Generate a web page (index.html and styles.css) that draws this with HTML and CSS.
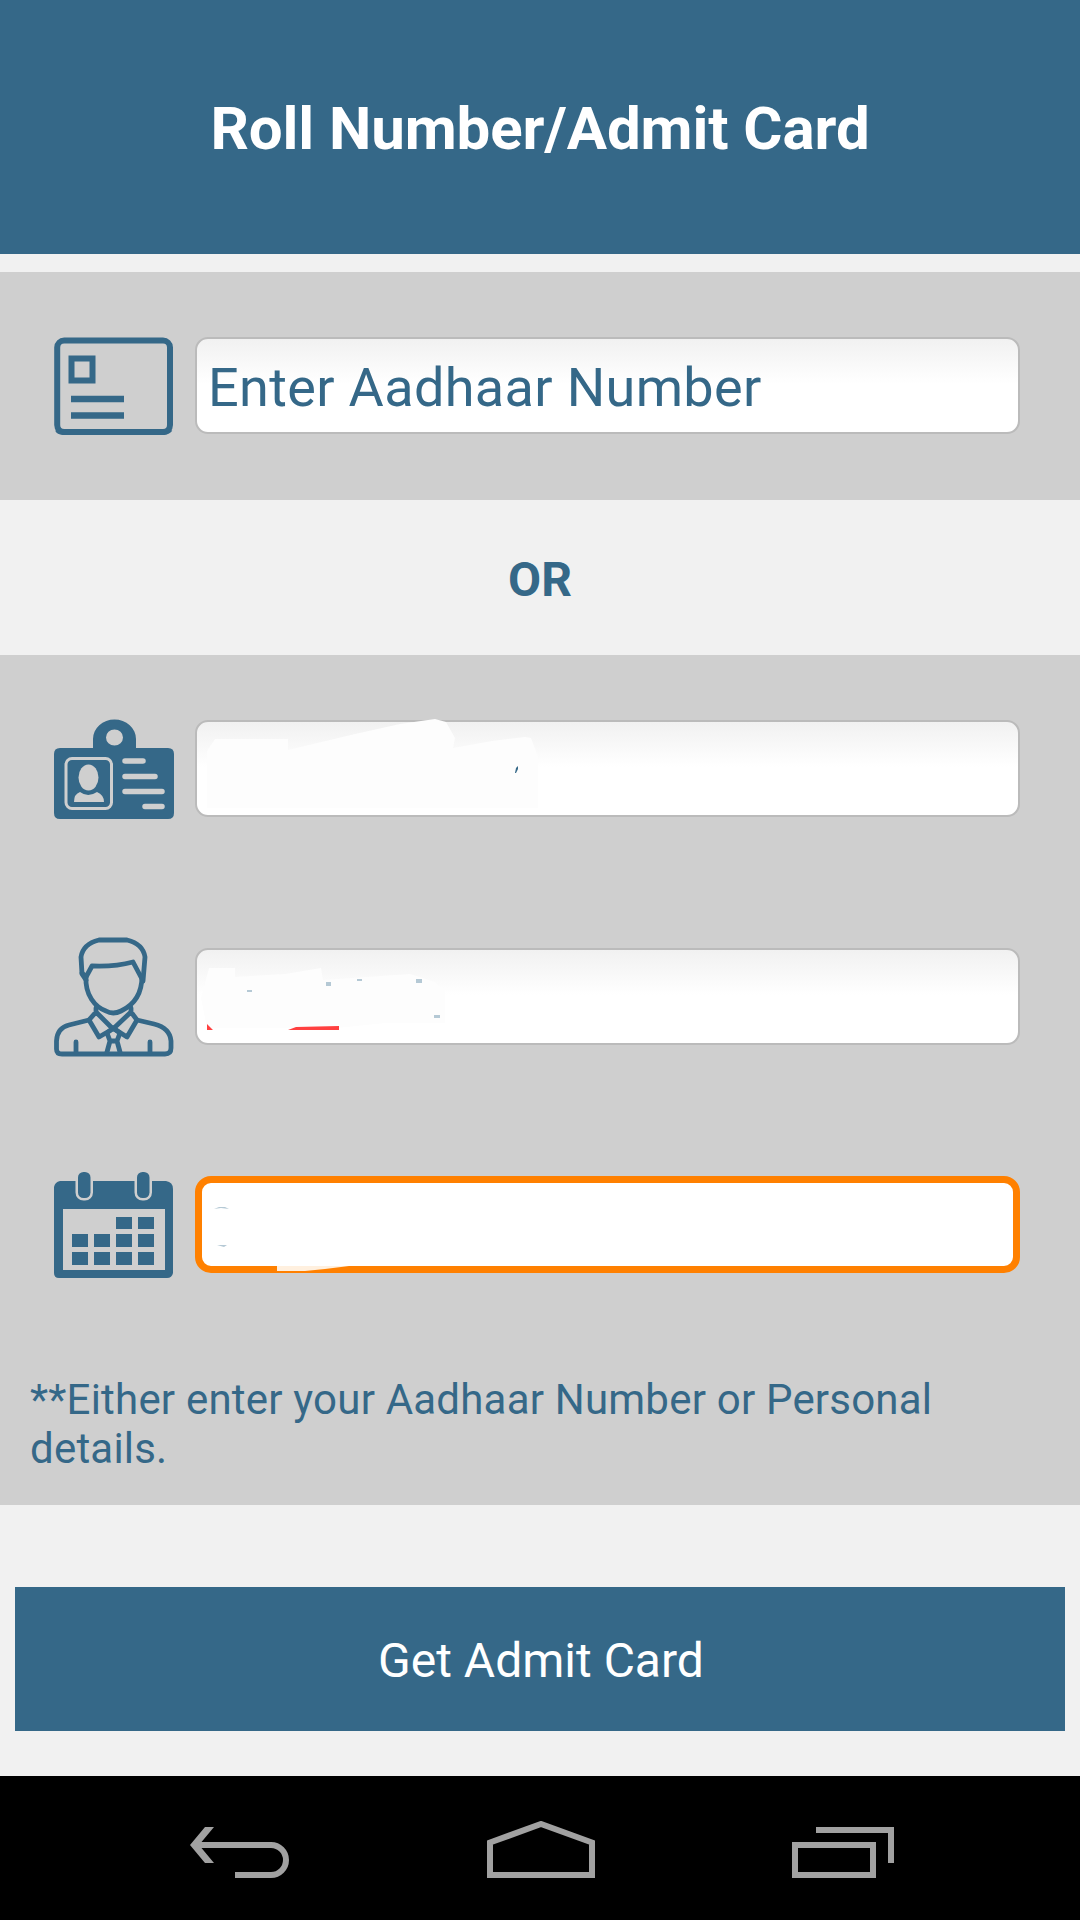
FILE: index.html
```html
<!DOCTYPE html>
<html lang="en">
<head>
<meta charset="utf-8">
<title>Roll Number/Admit Card</title>
<link rel="stylesheet" href="styles.css">
</head>
<body>
<header class="header"><h1 class="title">Roll Number/Admit Card</h1></header>
<main class="content">
  <section class="panel">
    <div class="row">
      <svg class="icon" viewBox="0 0 120 120">
        <rect class="line" x="3.2" y="14.500" width="112.8" height="91.500" rx="7" stroke-width="6"/>
        <path class="line" d="M2.500 104Q4 107 9 107.500H110Q115 107 117 104" stroke-width="3"/>
        <rect class="line" x="17.5" y="32.500" width="21" height="22" stroke-width="6"/>
        <path class="line" d="M17 73H70M17 89.500H70" stroke-width="6.500"/>
      </svg>
      <div class="field"><span class="placeholder">Enter Aadhaar Number</span></div>
    </div>
  </section>
  <div class="or">OR</div>
  <section class="panel">
    <div class="row">
      <svg class="icon" viewBox="0 0 120 120">
        <path class="solid" fill-rule="evenodd" d="M39 39V30A21.500 19.500 0 0 1 82 30V39H114Q120 39 120 45V104Q120 110 114 110H6Q0 110 0 104V45Q0 39 6 39ZM60.500 20.500A8.500 8 0 1 0 60.500 36.500A8.500 8 0 1 0 60.500 20.500Z"/>
        <rect class="light-line" x="12" y="49.500" width="45.500" height="50" rx="6"/>
        <ellipse class="light" cx="34.500" cy="68.500" rx="10" ry="13"/>
        <path class="light" d="M20 93Q20 85 26 83Q34 89 43 83Q50 86 50 93Z"/>
        <path class="light-bars" d="M71 52H89M71 67.500H101M71 82.500H108M91 97.500H108"/>
      </svg>
      <div class="field">
        <svg class="smudge" viewBox="0 0 825 97">
          <path d="M12 88V31L20 19H93V30L160 14 205 4 240 -1 251 2 260 18 258 28 297 21 330 17 336 18 343 37V88Z"/>
          <path class="ink" d="M320 53L321 48 323 46V49L321 53Z"/>
        </svg>
      </div>
    </div>
    <div class="row">
      <svg class="icon" viewBox="0 0 120 120">
        <g class="line" stroke-width="4.800" stroke-linejoin="round" stroke-linecap="round">
          <path d="M32 43L28 37 27 20Q29 7 45 3H73Q89 7 91 20L89 44"/>
          <path d="M28 36L32 40 38 29Q61 30 79 25L88 42"/>
          <path d="M32 40C31 58 41 70 52 74Q59 78 67 74C82 67 88 54 88 39"/>
          <path d="M42 71V75L35 83 45 100 57 93M77 71V75L83 83 73 100 62 93M42 75L59 92 77 75"/>
          <path d="M35 83L15 88Q3 91 2.500 104V112Q2.500 117 8 117H111Q117 117 117 111V104Q116 91 100 87L83 83"/>
          <path d="M22 105V116M96 105V116M53 115L56 104 53 96 59 91 66 96 63 104 66 115M56 104H63"/>
        </g>
      </svg>
      <div class="field">
        <svg class="smudge" viewBox="0 0 825 97">
          <path d="M12 80L6 50 14 20H40V29L90 26 126 20 128 32 215 26 240 34 250 44V75H190L142 80Z"/>
          <g class="spots"><path d="M52 42H57V44H52ZM131 34H136V38H131ZM162 31H167V33H162ZM221 31H227V35H221ZM239 67H245V70H239Z"/></g>
          <path class="spell" d="M12 76L18 82H12ZM93 82L101 79 144 78V82Z"/>
        </svg>
      </div>
    </div>
    <div class="row">
      <svg class="icon" viewBox="0 0 120 120">
        <path class="solid" fill-rule="evenodd" d="M6 16H112Q119 17 119 24V108Q118 113 113 113H5Q0 113 0 108V22Q1 17 6 16ZM9 44V105H111V44Z"/>
        <g class="rings"><rect x="24" y="7" width="12.500" height="26" rx="5.500"/><rect x="83" y="7" width="12.500" height="26" rx="5.500"/></g>
        <path class="solid" d="M62 52H78V64H62ZM84 52H100V64H84ZM18 69H34V82H18ZM40 69H56V82H40ZM62 69H78V82H62ZM84 69H100V82H84ZM18 87H34V100H18ZM40 87H56V100H40ZM62 87H78V100H62ZM84 87H100V100H84Z"/>
      </svg>
      <div class="field field-focus">
        <svg class="smudge" viewBox="0 0 825 97">
          <path class="cream" d="M82 90H154Q132 93 110 95H82Z"/>
          <g class="spots"><path d="M19 33L24 31H30L34 33 26 32ZM22 69H32L29 71Z"/></g>
        </svg>
      </div>
    </div>
    <p class="note">**Either enter your Aadhaar Number or Personal details.</p>
  </section>
  <button class="submit">Get Admit Card</button>
</main>
<nav class="navbar">
  <svg width="100" height="60" viewBox="0 0 100 60"><path class="solid-gray" d="M0 24L15 6H24L9 24 24 42H15Z"/><path d="M6 24H81A15 15 0 0 1 81 54H45"/></svg>
  <svg width="108" height="60" viewBox="0 0 108 60"><path d="M3 54V21.500L54 3 105 21.500V54Z"/></svg>
  <svg width="102" height="60" viewBox="0 0 102 60"><path d="M3 24H81V54H3ZM24 9H99V42"/></svg>
</nav>
</body>
</html>
```
FILE: styles.css
```css
* { box-sizing: border-box; }
body {
  margin: 0;
  width: 1080px;
  height: 1920px;
  display: flex;
  flex-direction: column;
  overflow: hidden;
  background: #f1f1f1;
  color: #356888;
  font-family: Roboto, sans-serif;
}
.header {
  height: 254px;
  padding-top: 94px;
  background: #356888;
  text-align: center;
}
.title {
  margin: 0;
  color: #fff;
  font-size: 60px;
  font-weight: 700;
  line-height: 70px;
  letter-spacing: -0.08px;
}
.content {
  flex: 1;
  display: flex;
  flex-direction: column;
  padding-top: 18px;
}
.panel { background: #cfcfcf; }
.row {
  height: 228px;
  display: flex;
  align-items: center;
  gap: 21px;
  padding: 0 60px 0 54px;
}
.icon { width: 120px; height: 120px; flex: none; }
.line { fill: none; stroke: #356888; }
.solid { fill: #356888; }
.light { fill: #cfcfcf; }
.light-line { fill: none; stroke: #cfcfcf; stroke-width: 3; }
.light-bars { fill: none; stroke: #cfcfcf; stroke-width: 5.5; stroke-linecap: round; }
.rings rect { fill: #356888; }
.rings { stroke: #cfcfcf; stroke-width: 5; paint-order: stroke; }
.field {
  position: relative;
  flex: 1;
  height: 97px;
  margin-bottom: 1px;
  display: flex;
  align-items: center;
  padding: 5px 11px 0;
  border: 2px solid #bbb;
  border-radius: 13px;
  background: linear-gradient(#f1f1f1, #fff 45px);
}
.field-focus {
  border: 7px solid #ff8000;
  border-radius: 16px;
  background: #fff;
}
.placeholder {
  font-size: 54px;
  line-height: 64px;
  letter-spacing: 0.35px;
  white-space: nowrap;
}
.smudge {
  position: absolute;
  top: -2px;
  left: -2px;
  width: 825px;
  height: 97px;
  overflow: visible;
  fill: #fdfdfd;
}
.field-focus .smudge { top: -7px; left: -7px; }
.smudge .ink { fill: #356888; }
.smudge .spots { fill: #b5c9d5; }
.smudge .spell { fill: #ff4040; }
.smudge .cream { fill: #fff0df; }
.or {
  height: 155px;
  padding-top: 52px;
  text-align: center;
  font-size: 48px;
  font-weight: 700;
  line-height: 56px;
}
.note {
  margin: 0;
  height: 166px;
  padding: 36px 30px 0;
  font-size: 42px;
  line-height: 49px;
  letter-spacing: 0.21px;
}
.submit {
  margin: 82px 15px 0;
  height: 144px;
  padding: 2px 0 0 2px;
  border: 0;
  background: #356888;
  color: #fff;
  font-family: inherit;
  font-size: 48px;
}
.navbar {
  height: 144px;
  display: flex;
  justify-content: space-between;
  padding: 45px 186px 0 190px;
  background: #000;
}
.navbar svg { fill: none; stroke: #a1a1a1; stroke-width: 6; }
.navbar .solid-gray { fill: #a1a1a1; stroke: none; }
```
